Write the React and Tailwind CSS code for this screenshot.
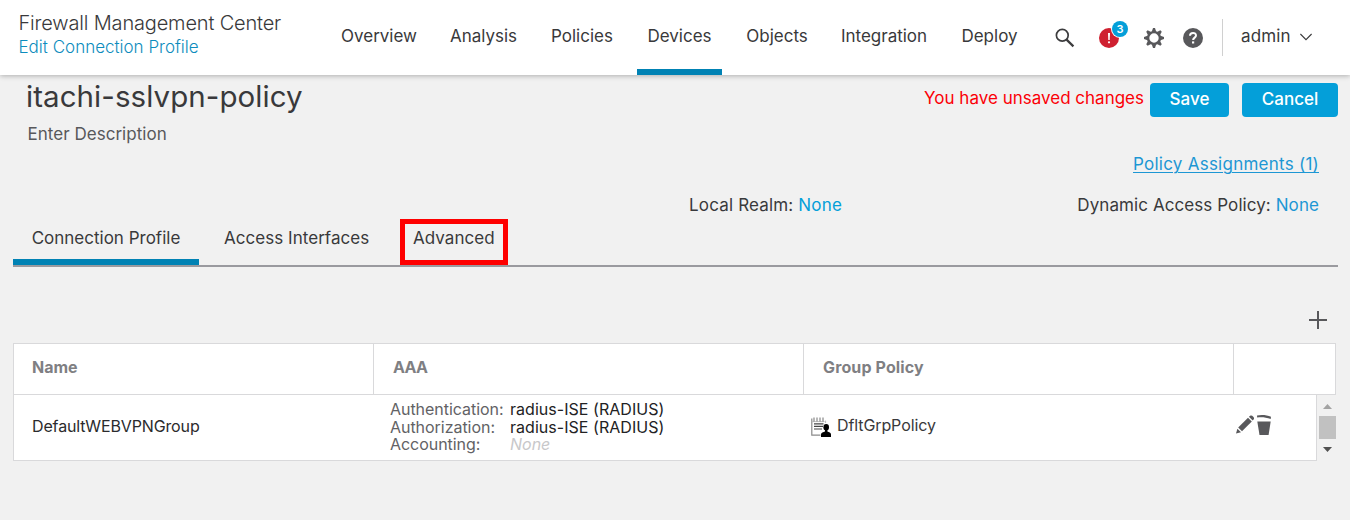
const navItems = [
  { label: 'Overview', box: 'ml-[331px] w-[96px]' },
  { label: 'Analysis', box: 'ml-[13px] w-[87px]' },
  { label: 'Policies', box: 'ml-[14px] w-[82px]' },
  { label: 'Devices', box: 'ml-[14px] w-[85px]', active: true },
  { label: 'Objects', box: 'ml-[14px] w-[82px]' },
  { label: 'Integration', box: 'ml-[12px] w-[108px]' },
  { label: 'Deploy', box: 'ml-[13px] w-[77px]' },
];

const aaa = [
  { label: 'Authentication:', value: 'radius-ISE (RADIUS)' },
  { label: 'Authorization:', value: 'radius-ISE (RADIUS)' },
  { label: 'Accounting:', value: null },
];

function SearchIcon() {
  return (
    <svg className="mt-[28px] ml-[27px] h-5 w-5 shrink-0" viewBox="0 0 20 20" fill="none" stroke="#3c3c3e">
      <circle cx="7.3" cy="7.3" r="5.9" strokeWidth="1.7" />
      <path d="M11.6 11.6 L18.4 18.4" strokeWidth="2.2" />
    </svg>
  );
}

function AlertIcon() {
  return (
    <div className="relative mt-[28px] ml-[24px] h-5 w-5 shrink-0">
      <svg className="h-5 w-5" viewBox="0 0 20 20">
        <circle cx="10" cy="10" r="10" fill="#cf2030" />
        <path d="M9 5 h2 l-.3 7 h-1.4z" fill="#fff" />
        <circle cx="10" cy="14.3" r="1.1" fill="#fff" />
      </svg>
      <span className="absolute top-[-7px] left-[13px] flex h-[16px] w-[16px] items-center justify-center rounded-full bg-[#049fd9] text-[11px] leading-none font-semibold text-white ring-1 ring-white">
        3
      </span>
    </div>
  );
}

function GearIcon() {
  const teeth = [0, 45, 90, 135, 180, 225, 270, 315];
  return (
    <svg className="mt-[28px] ml-[25px] h-5 w-5 shrink-0" viewBox="0 0 20 20" fill="#58585b">
      <circle cx="10" cy="10" r="5.9" fill="none" stroke="#58585b" strokeWidth="2.4" />
      {teeth.map((a) => (
        <path key={a} d="M7.6 4.2 L9 0 H11 L12.4 4.2z" transform={`rotate(${a} 10 10)`} />
      ))}
    </svg>
  );
}

function HelpIcon() {
  return (
    <svg className="mt-[28px] ml-[19px] h-5 w-5 shrink-0" viewBox="0 0 20 20">
      <circle cx="10" cy="10" r="10" fill="#58585b" />
      <path d="M7 7.8 C7 3.9 13.1 4 13 7.6 C13 9.6 10.1 9.7 10.1 12.1" fill="none" stroke="#fff" strokeWidth="2" />
      <rect x="9" y="13.4" width="2.2" height="2.1" fill="#fff" />
    </svg>
  );
}

function Header() {
  return (
    <header className="relative flex h-[75px] shrink-0 bg-white shadow-[0_1px_5px_rgba(0,0,0,0.28)]">
      <div className="-mr-[312px] flex w-[312px] shrink-0 flex-col pl-[18.5px] font-light whitespace-nowrap">
        <span className="mt-[11px] text-[20px] leading-[24px] tracking-[-0.17px] text-[#39393b]">Firewall Management Center</span>
        <span className="mt-[2px] text-[17px] leading-[20px] text-[#0d8cbd]">Edit Connection Profile</span>
      </div>
      <nav className="flex">
        {navItems.map((n) => (
          <a
            key={n.label}
            className={`flex h-[75px] shrink-0 justify-center pt-[24px] text-[17px] leading-[24px] text-[#39393b] ${n.box} ${n.active ? 'border-b-[6px] border-[#0082b4]' : ''}`}
          >
            {n.label}
          </a>
        ))}
      </nav>
      <SearchIcon />
      <AlertIcon />
      <GearIcon />
      <HelpIcon />
      <div className="mt-[19px] ml-[19px] flex h-[37px] border-l border-[#d0d0d0] pt-[5px] pl-[18px]">
        <span className="text-[17px] leading-[24px] tracking-[0.15px] text-[#39393b]">admin</span>
        <svg className="mt-[9px] ml-[9px] h-[8px] w-[12px]" viewBox="0 0 12 8" fill="none" stroke="#39393b" strokeWidth="1.1">
          <path d="M.4 1 L6 6.6 L11.6 1" />
        </svg>
      </div>
    </header>
  );
}

function GroupPolicyIcon() {
  return (
    <svg className="h-5 w-5 shrink-0" viewBox="0 0 20 20">
      <path d="M.8 1.5 V18.2 H9.5" fill="none" stroke="#8a8a8a" strokeWidth="1.2" />
      <path d="M.8 4.6 H13.5 M14.6 3.6 V6" fill="none" stroke="#bbb" strokeWidth="1" />
      <path d="M3 .5 V4.5 M6 .5 V4.5 M9 .5 V4.5 M12 .5 V4.5" stroke="#888" strokeWidth="1.2" />
      <path d="M3 6.8 H12.5 M3 9.4 H12 M3 12 H11" stroke="#444" strokeWidth="1.2" />
      <ellipse cx="15.2" cy="10.2" rx="2.8" ry="3.3" />
      <path d="M10 20 V17.5 C10 15.4 12.4 15 14 14.4 V12.5 H16.4 V14.4 C18 15 20 15.4 20 17.5 V20z" />
    </svg>
  );
}

function PencilIcon() {
  return (
    <svg className="h-[19px] w-[18px]" viewBox="0 0 18 19" fill="#58585b">
      <path d="M0 18.6 L1.4 13.7 L5 17.2z" />
      <path d="M2.2 12.6 L12 2.7 L15.8 6.4 L6 16.3z" />
      <path d="M12.9 1.8 C14.8 -.2 16 .4 17 1.4 C18.4 2.8 18.4 3.8 16.7 5.5z" />
    </svg>
  );
}

function TrashIcon() {
  return (
    <svg className="ml-[3px] h-[20px] w-[14px]" viewBox="0 0 14 20" fill="#58585b">
      <path d="M0 .6 C4 -.4 10 0 14 1.8 L13.7 4 C9 2.2 5 2 .2 2.4z" />
      <path d="M.3 6.5 H13.7 L11.6 20 H2.5z" />
    </svg>
  );
}

export default function App() {
  return (
    <div className="flex h-[520px] w-[1350px] flex-col overflow-hidden bg-[#f1f1f1] font-['Inter',sans-serif]">
      <Header />

      <div className="flex h-[75px] justify-between pr-[12px]">
        <div className="flex flex-col pl-[26px]">
          <h1 className="mt-[4px] text-[29.5px] leading-[34px] tracking-[0.06px] text-[#39393b]">itachi-sslvpn-policy</h1>
          <span className="mt-[11px] pl-[1.5px] text-[17px] leading-[20px] tracking-[0.03px] text-[#58585b]">Enter Description</span>
        </div>
        <div className="flex h-[42px] pt-[8px]">
          <span className="mt-[3px] text-[17px] leading-[24px] text-[#fb0007]">You have unsaved changes</span>
          <button className="ml-[6px] h-[34px] w-[79px] rounded-[4px] bg-[#049fd9] pb-px text-[17px] font-medium text-white">Save</button>
          <button className="ml-[13px] h-[34px] w-[96px] rounded-[4px] bg-[#049fd9] pb-px text-[17px] font-medium text-white">Cancel</button>
        </div>
      </div>

      <div className="flex h-[69px] flex-col pr-[31px] text-[17px] leading-[24px] text-[#39393b]">
        <a className="mt-[2px] self-end tracking-[0.25px] text-[#1d97d4] underline decoration-1 underline-offset-2">Policy Assignments (1)</a>
        <div className="mt-[17px] flex justify-between pl-[689px] tracking-[0.08px]">
          <span className="tracking-[0.17px]">Local Realm: <a className="text-[#049fd9]">None</a></span>
          <span>Dynamic Access Policy: <a className="text-[#1d97d4]">None</a></span>
        </div>
      </div>

      <div className="mr-[12px] ml-[13px] flex h-[48px] shrink-0 border-b-2 border-[#9a9a9f] text-[17px] leading-[24px] text-[#39393b]">
        <div className="flex h-[46px] w-[186px] justify-center border-b-[6px] border-[#0082b4] pt-[7px]">Connection Profile</div>
        <div className="ml-[14px] w-[168px] pt-[7px] pl-[11px] tracking-[0.04px]">Access Interfaces</div>
        <div className="ml-[19px] h-[46px] w-[108px] border-[5px] border-[#fe0000] pt-[2px] pl-[8px] tracking-[0.05px]">Advanced</div>
      </div>

      <div className="flex h-[76px] shrink-0 justify-end pt-[44px] pr-[23px]">
        <svg className="h-[18px] w-[18px]" viewBox="0 0 18 18" stroke="#58585b" strokeWidth="2">
          <path d="M9 0 V18 M0 9 H18" />
        </svg>
      </div>

      <div className="ml-[13px] w-[1323px] text-[16px]">
        <div className="flex h-[52px] border border-[#d9d9db] bg-white leading-[47px] font-bold text-[#7f7f83]">
          <div className="w-[360px] border-r border-[#d9d9db] pl-[18px]">Name</div>
          <div className="w-[430px] border-r border-[#d9d9db] pl-[19px] tracking-[-0.7px]">AAA</div>
          <div className="w-[430px] border-r border-[#d9d9db] pl-[19px] tracking-[0.13px]">Group Policy</div>
        </div>
        <div className="flex h-[66px]">
          <div className="flex w-[1304px] shrink-0 border-r border-b border-l border-[#d9d9db] bg-white">
            <div className="w-[375px] pt-[21px] pl-[18px] leading-[20px] tracking-[-0.13px] text-[#2b2b2d]">DefaultWEBVPNGroup</div>
            <div className="w-[422px] pt-[6px] pl-px">
              {aaa.map((r) => (
                <div key={r.label} className="flex h-[17.5px] leading-[17.5px]">
                  <span className="w-[120px] tracking-[-0.04px] text-[#626265]">{r.label}</span>
                  {r.value ? <span className="tracking-[0.04px] text-[#222224]">{r.value}</span> : <span className="text-[#c8c8ca] italic">None</span>}
                </div>
              ))}
            </div>
            <div className="flex w-[425px] pt-[22px]">
              <GroupPolicyIcon />
              <span className="-mt-[2px] ml-[6px] leading-[20px] tracking-[-0.1px] text-[#39393b]">DfltGrpPolicy</span>
            </div>
            <div className="flex pt-[20px]">
              <PencilIcon />
              <TrashIcon />
            </div>
          </div>
          <div className="flex w-[19px] flex-col pl-[2px]">
            <svg className="mt-[9px] ml-[4px] h-[5px] w-[9px]" viewBox="0 0 9 5" fill="#a3a3a3"><path d="M4.5 0 L9 5 H0z" /></svg>
            <div className="mt-[7px] h-[23px] w-[17px] bg-[#c1c1c1]" />
            <svg className="mt-[8px] ml-[4px] h-[5px] w-[9px]" viewBox="0 0 9 5" fill="#505050"><path d="M4.5 5 L9 0 H0z" /></svg>
          </div>
        </div>
      </div>
    </div>
  );
}
